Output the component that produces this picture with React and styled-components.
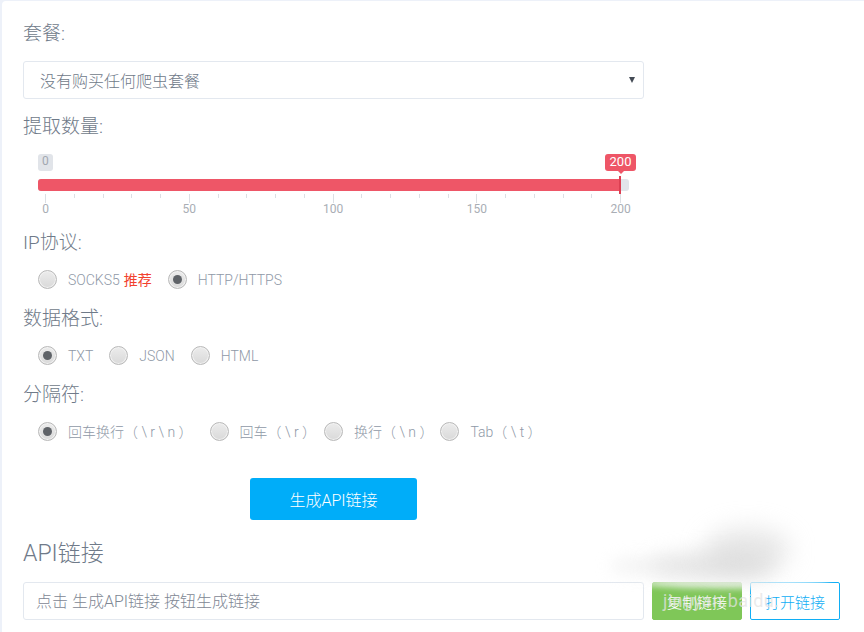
import React from 'react';
import styled, { createGlobalStyle } from 'styled-components';

const GlobalStyle = createGlobalStyle`
  html, body {
    margin: 0;
    height: 100%;
    overflow: hidden;
    background: #edf1f9;
  }
  body {
    font-family: Roboto, "Noto Sans CJK SC", sans-serif;
  }
`;

const Page = styled.div`
  position: relative;
  width: 864px;
  height: 632px;
  overflow: hidden;
  padding: 1px 0 0 2px;
  box-sizing: border-box;
`;

const Card = styled.div`
  height: 700px;
  background: #fff;
  border-top-left-radius: 4px;
  padding: 19px 0 0 21px;
  box-sizing: border-box;
`;

const Label = styled.div`
  font-size: 19px;
  line-height: 26px;
  font-weight: 300;
  color: #6f7a89;
  padding-top: 1px;
  margin-bottom: 14px;
`;

const Heading = styled(Label)`
  font-size: 23px;
  margin-top: 20px;
  margin-bottom: 15px;
`;

const SelectBox = styled.div`
  width: 621px;
  height: 38px;
  box-sizing: border-box;
  border: 1px solid #e3e8ef;
  border-radius: 3px;
  padding: 0 8px 0 16px;
  margin-bottom: 14px;
  display: flex;
  align-items: center;
  justify-content: space-between;
  font-size: 16px;
  font-weight: 300;
  color: #6f7a89;
`;

const Caret = styled.span`
  width: 0;
  height: 0;
  border-left: 3px solid transparent;
  border-right: 3px solid transparent;
  border-top: 6px solid #444b55;
`;

const Slider = styled.div`
  position: relative;
  width: 591px;
  margin-left: 15px;
  padding-top: 25px;
  height: 62px;
  box-sizing: border-box;
  margin-bottom: 13px;
`;

const MinTag = styled.span`
  position: absolute;
  left: 0;
  top: 0;
  height: 17px;
  line-height: 15px;
  padding: 0 4px;
  border-radius: 3px;
  background: #e1e4e9;
  color: #a1a7b0;
  font-size: 12px;
`;

const ValueTag = styled.span`
  position: absolute;
  left: 567px;
  top: 0;
  width: 31px;
  height: 17px;
  line-height: 16px;
  text-align: center;
  border-radius: 3px;
  background: #ee5667;
  color: #fff;
  font-size: 13px;

  &::after {
    content: '';
    position: absolute;
    left: 13px;
    top: 17px;
    border-left: 3px solid transparent;
    border-right: 3px solid transparent;
    border-top: 3px solid #ee5667;
  }
`;

const Track = styled.div`
  height: 12px;
  background: #e2e5ea;
  border-radius: 3px;
  overflow: hidden;
`;

const Fill = styled.div`
  height: 100%;
  background: #ee5667;
`;

const Handle = styled.span`
  position: absolute;
  left: 581px;
  top: 22px;
  width: 2px;
  height: 18px;
  background: #dc3f52;
`;

const Ticks = styled.div`
  width: 576px;
  margin: 3px 0 0 7px;
  display: flex;
  justify-content: space-between;
  align-items: flex-start;
`;

const Tick = styled.span`
  width: 1px;
  height: ${({ $major }) => ($major ? 9 : 4)}px;
  background: #dcdfe4;
`;

const Scale = styled.div`
  width: 576px;
  margin: -1px 0 0 7px;
  display: flex;
  justify-content: space-between;
`;

const ScaleItem = styled.span`
  width: 1px;
  display: flex;
  justify-content: center;
  font-size: 12px;
  line-height: 14px;
  color: #a9aeb5;
`;

const RadioRow = styled.div`
  display: flex;
  align-items: center;
  gap: 16px;
  height: 19px;
  margin: 0 0 ${({ $after }) => $after}px 15px;
`;

const RadioItem = styled.label`
  display: flex;
  align-items: center;
  gap: 11px;
  font-size: 14px;
  line-height: 18px;
  font-weight: 300;
  color: #8f99a7;
  margin-right: ${({ $shift }) => $shift || 0}px;
`;

const RadioDot = styled.span`
  width: 19px;
  height: 19px;
  box-sizing: border-box;
  border-radius: 50%;
  border: 1px solid #b9b9b9;
  background: linear-gradient(#ececec, #d9d9d9);
  box-shadow: inset 0 0 0 1px #f2f2f2;
  display: flex;
  align-items: center;
  justify-content: center;

  &::after {
    content: '';
    width: 9px;
    height: 9px;
    border-radius: 50%;
    background: ${({ $checked }) => ($checked ? '#5f6368' : 'transparent')};
  }
`;

const Recommend = styled.span`
  color: #f2412e;
  font-weight: 400;
  margin-left: 4px;
`;

const ButtonRow = styled.div`
  display: flex;
  padding-left: 227px;
`;

const GenerateButton = styled.button`
  width: 167px;
  height: 42px;
  border: 0;
  border-radius: 3px;
  background: #00adf9;
  color: #fff;
  font: 300 16px Roboto, "Noto Sans CJK SC", sans-serif;
`;

const LinkRow = styled.div`
  display: flex;
  gap: 8px;
`;

const LinkInput = styled.input`
  width: 621px;
  height: 38px;
  box-sizing: border-box;
  border: 1px solid #e3e8ef;
  border-radius: 3px;
  padding: 0 12px;
  font: 300 16px Roboto, "Noto Sans CJK SC", sans-serif;
  outline: none;

  &::placeholder {
    color: #7e8794;
    opacity: 1;
  }
`;

const LinkButton = styled.button`
  width: 90px;
  height: 38px;
  box-sizing: border-box;
  border-radius: 2px;
  border: 1px solid ${({ $outline }) => ($outline ? '#10aef5' : '#7fc758')};
  background: ${({ $outline }) => ($outline ? '#fff' : '#7fc758')};
  color: ${({ $outline }) => ($outline ? '#10aef5' : '#fff')};
  font: 300 15px Roboto, "Noto Sans CJK SC", sans-serif;
`;

const Smudge = styled.div`
  position: absolute;
  left: ${({ $x }) => $x}px;
  top: ${({ $y }) => $y}px;
  width: ${({ $w }) => $w}px;
  height: ${({ $h }) => $h}px;
  border-radius: 50%;
  background: ${({ $c }) => $c};
  filter: blur(${({ $b }) => $b}px);
  pointer-events: none;
`;

const Watermark = styled.span`
  position: absolute;
  left: 663px;
  top: 589px;
  font: 400 18px/24px Roboto, sans-serif;
  letter-spacing: 0.4px;
  color: rgba(228, 228, 228, 0.75);
  pointer-events: none;
  white-space: nowrap;
`;

const ticks = Array.from({ length: 21 }, (_, i) => i * 10);
const scale = [0, 50, 100, 150, 200];

const smudges = [
  { x: 640, y: 578, w: 190, h: 10, c: 'rgba(255,255,255,0.8)', b: 3 },
  { x: 650, y: 552, w: 125, h: 28, c: 'rgba(212,212,212,0.6)', b: 10 },
  { x: 705, y: 528, w: 85, h: 44, c: 'rgba(212,212,212,0.55)', b: 12 },
  { x: 610, y: 558, w: 60, h: 16, c: 'rgba(228,228,228,0.45)', b: 8 },
];

const App = () => {
  const value = 200;

  return (
    <Page>
      <GlobalStyle />
      <Card>
        <Label>套餐:</Label>
        <SelectBox>
          <span>没有购买任何爬虫套餐</span>
          <Caret />
        </SelectBox>

        <Label>提取数量:</Label>
        <Slider>
          <MinTag>0</MinTag>
          <ValueTag>{value}</ValueTag>
          <Track>
            <Fill style={{ width: `${(582 / 591) * (value / 2)}%` }} />
          </Track>
          <Handle />
          <Ticks>
            {ticks.map((t) => (
              <Tick key={t} $major={t % 50 === 0} />
            ))}
          </Ticks>
          <Scale>
            {scale.map((s) => (
              <ScaleItem key={s}>{s}</ScaleItem>
            ))}
          </Scale>
        </Slider>

        <Label>IP协议:</Label>
        <RadioRow $after={16}>
          <RadioItem>
            <RadioDot />
            <span>SOCKS5<Recommend>推荐</Recommend></span>
          </RadioItem>
          <RadioItem>
            <RadioDot $checked />
            HTTP/HTTPS
          </RadioItem>
        </RadioRow>

        <Label>数据格式:</Label>
        <RadioRow $after={16}>
          <RadioItem>
            <RadioDot $checked />
            TXT
          </RadioItem>
          <RadioItem>
            <RadioDot />
            JSON
          </RadioItem>
          <RadioItem>
            <RadioDot />
            HTML
          </RadioItem>
        </RadioRow>

        <Label>分隔符:</Label>
        <RadioRow $after={37}>
          <RadioItem $shift={1}>
            <RadioDot $checked />
            回车换行（ \ r \ n ）
          </RadioItem>
          <RadioItem $shift={-8}>
            <RadioDot />
            回车（ \ r ）
          </RadioItem>
          <RadioItem $shift={-9}>
            <RadioDot />
            换行（ \ n ）
          </RadioItem>
          <RadioItem>
            <RadioDot />
            Tab（ \ t ）
          </RadioItem>
        </RadioRow>

        <ButtonRow>
          <GenerateButton>生成API链接</GenerateButton>
        </ButtonRow>

        <Heading>API链接</Heading>
        <LinkRow>
          <LinkInput placeholder="点击 生成API链接 按钮生成链接" readOnly />
          <LinkButton>复制链接</LinkButton>
          <LinkButton $outline>打开链接</LinkButton>
        </LinkRow>
      </Card>

      {smudges.map((s, i) => (
        <Smudge key={i} $x={s.x} $y={s.y} $w={s.w} $h={s.h} $c={s.c} $b={s.b} />
      ))}
      <Watermark>jingyan.baidu.</Watermark>
    </Page>
  );
};

export default App;
